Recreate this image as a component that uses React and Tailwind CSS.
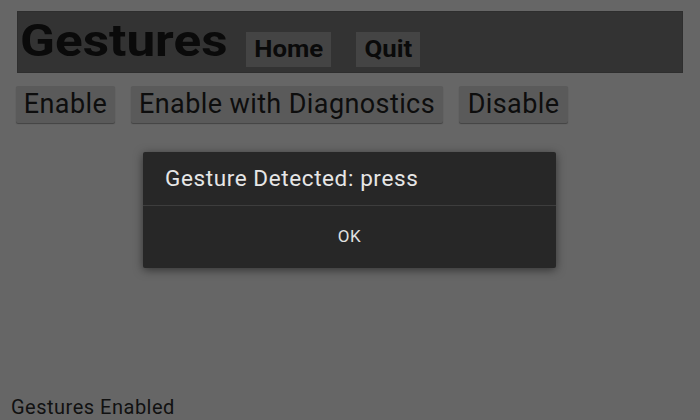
import React from "react";

const font = { fontFamily: "Roboto, 'Noto Sans', sans-serif" };

const App = () => {
    return (
        <div className="relative w-[700px] h-[420px] overflow-hidden bg-[#666666] flex flex-col" style={font}>
            {/* Header bar */}
            <div className="mx-[17px] mt-[11px] h-[62px] bg-[#333333] border border-[#2e2e2e] flex items-center">
                <h1 className="w-[209px] pl-[2px] pb-[4px] text-[45px] font-bold text-[#0a0a0a] leading-none">
                    <span className="inline-block origin-left scale-x-[1.14]">Gestures</span>
                </h1>
                <button className="ml-[19px] mt-[14px] h-[35px] w-[85px] bg-[#444444] text-[23px] font-bold text-[#0a0a0a] leading-none">
                    <span className="inline-block scale-x-[1.12]">Home</span>
                </button>
                <button className="ml-[25px] mt-[14px] h-[35px] w-[64px] bg-[#444444] text-[23px] font-bold text-[#0a0a0a] leading-none">
                    <span className="inline-block scale-x-[1.12]">Quit</span>
                </button>
            </div>

            {/* Gesture controls */}
            <div className="flex gap-[16px] ml-[16px] mt-[13px]">
                <button className="h-[37px] w-[99px] pb-[1px] bg-[#5a5a5a] rounded-[2px] shadow-[0_1px_1px_rgba(0,0,0,0.35)] text-[27px] text-[#0d0d0d] leading-none tracking-[0.4px]">Enable</button>
                <button className="h-[37px] w-[312px] pb-[1px] bg-[#5a5a5a] rounded-[2px] shadow-[0_1px_1px_rgba(0,0,0,0.35)] text-[27px] text-[#0d0d0d] leading-none tracking-[0.4px]">Enable with Diagnostics</button>
                <button className="h-[37px] w-[109px] pb-[1px] bg-[#5a5a5a] rounded-[2px] shadow-[0_1px_1px_rgba(0,0,0,0.35)] text-[27px] text-[#0d0d0d] leading-none tracking-[0.4px]">Disable</button>
            </div>

            <p className="mt-auto ml-[11px] mb-[1px] text-[20px] text-[#111111] leading-[24px] tracking-[0.5px]">Gestures Enabled</p>

            {/* Alert dialog */}
            <div className="absolute left-[143px] top-[152px] w-[413px] h-[116px] bg-[#272727] rounded-[2px] shadow-[0_2px_10px_rgba(0,0,0,0.5)] flex flex-col">
                <div className="h-[53px] flex items-center pl-[22px] text-[22.5px] text-[#e6e6e6] leading-none tracking-[0.6px]">Gesture Detected: press</div>
                <div className="h-px bg-[#3d3d3d]" />
                <div className="flex-1 flex items-center justify-center text-[17px] text-[#e0e0e0] tracking-[0.5px]">OK</div>
            </div>
        </div>
    );
};

export default App;
